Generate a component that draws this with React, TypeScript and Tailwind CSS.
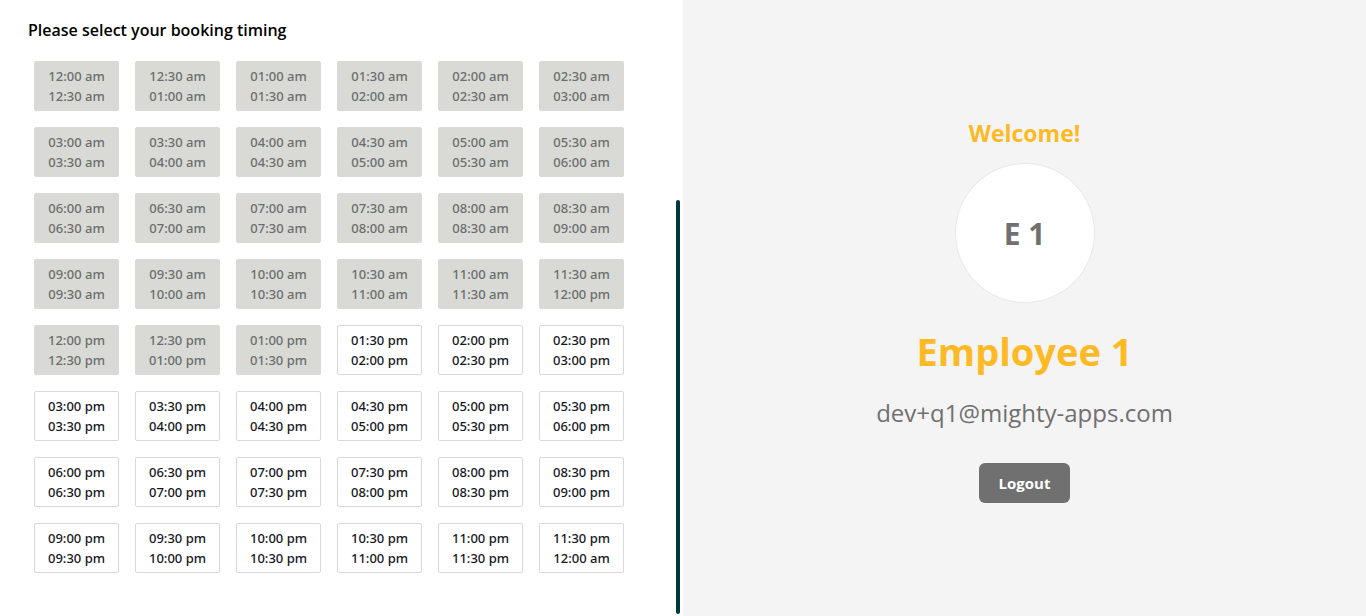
const SLOT_COUNT = 48;
const FIRST_OPEN_SLOT = 27;

function formatTime(halfHours: number): string {
  const hour = Math.floor(halfHours / 2) % 24;
  const minutes = halfHours % 2 === 0 ? "00" : "30";
  const displayHour = String(hour % 12 || 12).padStart(2, "0");
  return `${displayHour}:${minutes} ${hour < 12 ? "am" : "pm"}`;
}

const slots = Array.from({ length: SLOT_COUNT }, (_, index) => ({
  start: formatTime(index),
  end: formatTime(index + 1),
  disabled: index < FIRST_OPEN_SLOT,
}));

function TimeSlot({ start, end, disabled }: { start: string; end: string; disabled: boolean }) {
  return (
    <button
      type="button"
      disabled={disabled}
      className="flex flex-col items-center rounded-xs border border-[#d9dad5] bg-white py-1 font-['Noto_Sans','Open_Sans',sans-serif] text-[13px] leading-5 font-medium text-[#16181d] enabled:cursor-pointer disabled:bg-[#d9dad5] disabled:text-[#6b6e6f]"
    >
      <span>{start}</span>
      <span>{end}</span>
    </button>
  );
}

function BookingPanel() {
  return (
    <section className="flex w-1/2 bg-white">
      <div className="flex-1 pt-4 pr-13 pb-10 pl-7">
        <h1 className="text-base leading-7 font-semibold text-black">Please select your booking timing</h1>
        <div className="mt-[17px] ml-1.5 grid grid-cols-6 gap-4">
          {slots.map((slot) => (
            <TimeSlot key={slot.start} {...slot} />
          ))}
        </div>
      </div>
      <div className="mr-[3px] flex w-1 flex-col pt-[200px] pb-0.5">
        <div className="flex-1 rounded-full bg-[#003840]" />
      </div>
    </section>
  );
}

function ProfilePanel() {
  return (
    <aside className="flex w-1/2 flex-col items-center justify-center bg-[#f4f4f4]">
      <h2 className="text-[23px] leading-10 font-bold text-[#fdba24]">Welcome!</h2>
      <div className="mt-2.5 flex size-35 items-center justify-center rounded-full border border-[#e8e8e8] bg-white pt-0.5 text-3xl font-bold text-[#707070]">
        E 1
      </div>
      <h3 className="mt-5 text-[38px] leading-14 font-bold text-[#fdba24]">Employee 1</h3>
      <p className="mt-4 text-2xl leading-9 text-[#707070]">dev+q1@mighty-apps.com</p>
      <button
        type="button"
        className="mt-8 h-10 cursor-pointer rounded-md bg-[#707070] px-5 text-[15px] font-bold text-white"
      >
        Logout
      </button>
    </aside>
  );
}

export default function App() {
  return (
    <main className="flex min-h-screen font-['Open_Sans','Noto_Sans',sans-serif]">
      <BookingPanel />
      <ProfilePanel />
    </main>
  );
}
